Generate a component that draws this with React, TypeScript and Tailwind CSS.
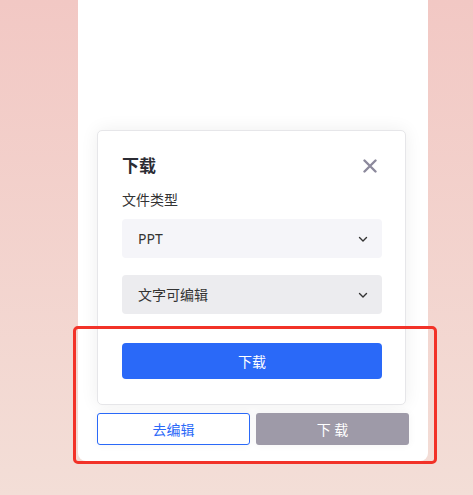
import React from "react";

const font = { fontFamily: '"Noto Sans", "Noto Sans CJK SC", sans-serif' };

function Chevron() {
  return (
    <svg width="12" height="12" viewBox="0 0 12 12" fill="none">
      <path d="M2.5 4.5 L6 8 L9.5 4.5" stroke="#333" strokeWidth="1.4" strokeLinecap="round" strokeLinejoin="round" />
    </svg>
  );
}

export default function App() {
  return (
    <div
      className="relative w-[473px] h-[495px] overflow-hidden bg-gradient-to-b from-[#f2c8c4] to-[#f3ded7]"
      style={font}
    >
      <div className="ml-[78px] w-[350px] h-[461px] bg-white rounded-b-[8px] pt-[130px] px-[19px]">
        <div className="w-[309px] rounded-[5px] border border-[#e6e6e9] bg-white shadow-[0_0_18px_rgba(0,0,0,0.07)] pl-[24px] pr-[23px] pt-[23px] pb-[25px]">
          <div className="flex items-center justify-between h-[24px]">
            <span className="text-[17px] font-bold text-[#2b2b33] leading-[24px]">下载</span>
            <svg width="14" height="14" viewBox="0 0 14 14" className="mr-[5px]">
              <path d="M1.5 1.5 L12.5 12.5 M12.5 1.5 L1.5 12.5" stroke="#8c899c" strokeWidth="2.4" strokeLinecap="round" />
            </svg>
          </div>
          <div className="mt-[12px] text-[14px] leading-[20px] text-[#333]">文件类型</div>
          <div className="mt-[9px] h-[39px] rounded-[4px] bg-[#f5f5f9] flex items-center justify-between pl-[16px] pr-[13px] text-[14px] text-[#333]">
            <span>PPT</span>
            <Chevron />
          </div>
          <div className="mt-[17px] h-[39px] rounded-[4px] bg-[#ececef] flex items-center justify-between pl-[16px] pr-[13px] text-[14px] text-[#333]">
            <span>文字可编辑</span>
            <Chevron />
          </div>
          <div className="mt-[29px] h-[36px] rounded-[4px] bg-[#2a69f8] flex items-center justify-center text-[14px] text-white">
            下载
          </div>
        </div>
        <div className="mt-[8px] flex gap-[6px]">
          <div className="w-[153px] h-[32px] rounded-[3px] border border-[#2a69f8] bg-white flex items-center justify-center text-[14px] text-[#2a69f8] shadow-[0_0_8px_rgba(0,0,0,0.05)]">
            去编辑
          </div>
          <div className="w-[153px] h-[32px] rounded-[3px] bg-[#9e9aa8] flex items-center justify-center text-[14px] text-white shadow-[0_0_8px_rgba(0,0,0,0.05)]">
            下 载
          </div>
        </div>
      </div>
      <div className="absolute left-[73px] top-[326px] w-[364px] h-[138px] border-[3px] border-[#f23228] rounded-[5px] pointer-events-none" />
    </div>
  );
}
